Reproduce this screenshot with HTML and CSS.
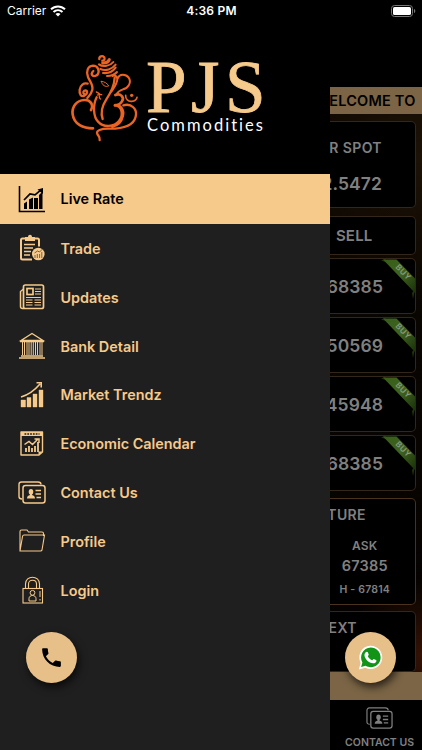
FILE: index.html
```
<!DOCTYPE html>
<html lang="en">
<head>
<meta charset="UTF-8">
<meta name="viewport" content="width=device-width, initial-scale=1.0">
<title>PJS Commodities</title>
<link rel="stylesheet" href="styles.css">
</head>
<body>
  <div class="app">
    <!-- Side menu -->
    <aside class="drawer">
      <div class="logo">
        <svg class="logo-mark" viewBox="0 0 270 318">
          <g fill="none" stroke="#ea6524" stroke-width="7" stroke-linecap="round">
            <path d="M118 45c-1-8 9-11 14-6 5 6 0 11-5 11"/>
            <path d="M128 57c9 1 17-3 20-10" stroke-width="9"/>
            <path d="M117 61c12 9 34 5 43-7M121 75c16 7 35 1 46-13M129 87c17 2 30-5 38-16M141 96c13 0 23-4 30-12" stroke-width="6"/>
            <path d="M111 93c-13 9-21-3-11-12M112 93c9-13 1-28-13-28-17 1-21 19-15 34 7 16 16 24 13 38-3 13-9 18-15 25"/>
            <path d="M83 119c-12-4-22 5-24 18-2 14 5 23 14 18 9-4 11-15 4-16-7 0-9 7-5 11"/>
            <path d="M164 101c-1 28-13 47-25 65-13 20-18 39-11 59" stroke-width="7"/>
            <path d="M158 96c7-4 14 2 14 9 0 14-10 26-18 38" stroke-width="6"/>
            <path d="M173 103c5-14 24-14 33-2 10 15-2 32-17 35-10 3-16 8-20 16" stroke-width="6"/>
            <path d="M124 112c10 1 18 6 22 14-10 4-20-2-22-14z" stroke-width="3"/>
            <path d="M109 144c4 1 7 3 10 7M112 153c5-2 8-2 13-1M118 154c-1 5 0 8 3 11" stroke-width="4"/>
            <path d="M110 160c-12 24-10 58 4 73 17 19 49 16 63-2 16-21 7-46-13-47"/>
            <path d="M166 153c16-7 28 8 20 19-5 8-15 12-23 12 19-3 30 14 25 33-4 18-17 28-31 31" stroke-width="8"/>
            <path d="M93 198c9-16-2-31-20-30-24 1-38 21-35 43 4 30 32 42 61 42" stroke-width="8"/>
            <path d="M190 184c24-7 43 11 37 34-7 30-43 36-78 36-26-1-42 6-37 16 2 5 9 8 7 18" stroke-width="7"/>
            <path d="M197 154c-1 12 8 19 18 18 9-1 15-6 16-12" stroke-width="5"/>
          </g>
          <circle cx="215" cy="154" r="5" fill="#ea6524"/>
        </svg>
        <svg class="logo-name" viewBox="0 0 124 90">
          <text class="logo-big" x="1 46 80" y="68.300">PJS</text>
          <text class="logo-small" x="2" y="86.500" textLength="116">Commodities</text>
        </svg>
      </div>

      <nav class="menu">
        <a class="menu-item active">
          <svg class="icon" viewBox="0 0 28 28">
            <path d="M1.500 1v25.500H27" fill="none" stroke="currentColor" stroke-width="1.600"/>
            <path d="M6 18.500l3-2V24H6zM11 14.500l4-2V24h-4zM16 13h4v11h-4zM21 10l3.500-3.500V24H21z" fill="currentColor"/>
            <path d="M6 15l6-6 5 .8 6-5" fill="none" stroke="currentColor" stroke-width="1.700"/>
            <path d="M19.500 4.500L25 3v6z" fill="currentColor"/>
          </svg>
          <span>Live Rate</span>
        </a>
        <a class="menu-item">
          <svg class="icon" viewBox="0 0 28 28">
            <path d="M7 4.500H4.500Q3 4.500 3 6v18q0 1.500 1.500 1.500H14M17 4.500h2.500Q21 4.500 21 6v6.500" fill="none" stroke="currentColor" stroke-width="2"/>
            <path d="M7 3h3c0-3 4-3 4 0h3v4H7z" fill="currentColor"/>
            <path d="M6 10.500h11M6 14h9M6 17.500h7M6 21h6" stroke="currentColor" stroke-width="1.500"/>
            <circle cx="20.300" cy="20" r="6.300" fill="currentColor"/>
            <path d="M17 24v-3m2.300 3v-4m2.300 4v-4m2.200 4v-6M16.500 19l3-2 2 1 3-3" fill="none" stroke="#1f1f1f" stroke-width=".6"/>
          </svg>
          <span>Trade</span>
        </a>
        <a class="menu-item">
          <svg class="icon" viewBox="0 0 28 28">
            <path d="M6 25.500H4.500Q2.500 25.500 2.500 23.500V8.500l3-2.500" fill="none" stroke="currentColor" stroke-width="1.500"/>
            <rect x="5.500" y="2" width="20" height="23.500" rx="1.800" fill="none" stroke="currentColor" stroke-width="1.700"/>
            <rect x="9" y="5.500" width="6" height="6" fill="none" stroke="currentColor" stroke-width="1.700"/>
            <path d="M17 6h6M17 8.500h6M17 11h6M8 14.500h15M8 17h6.500M16.500 17H23M8 19.500h6.500M16.500 19.500H23M8 22h6.500M16.500 22H23" stroke="currentColor" stroke-width="1"/>
          </svg>
          <span>Updates</span>
        </a>
        <a class="menu-item">
          <svg class="icon" viewBox="0 0 28 28">
            <path d="M3 8.500l11-7 11 7zM2 9.500h24M1 26h26M3 24h22" fill="none" stroke="currentColor" stroke-width="1.400"/>
            <path d="M4.500 10v13M6.500 10v13M9 10v13M11 10v13M13.200 10v13M15.300 10v13M17.500 10v13M19.500 10v13M22 10v13M24 10v13" stroke="currentColor" stroke-width="1"/>
          </svg>
          <span>Bank Detail</span>
        </a>
        <a class="menu-item">
          <svg class="icon" viewBox="0 0 28 28">
            <path d="M3 19h4.500v7H3zM9 16.500h4V26H9zM15 13h4v13h-4zM21 9h4v17h-4z" fill="currentColor" stroke="currentColor" stroke-width=".4"/>
            <path d="M3 16c7-2 13-6 19-13M18.500 1.700h4.700v4.700" fill="none" stroke="currentColor" stroke-width="1.600"/>
          </svg>
          <span>Market Trendz</span>
        </a>
        <a class="menu-item">
          <svg class="icon" viewBox="0 0 28 28">
            <path d="M3 2h21.500v20L21 25H3z" fill="none" stroke="currentColor" stroke-width="1.400" stroke-linejoin="round"/>
            <path d="M3 2h21.500v4H3z" fill="currentColor"/>
            <path d="M6.500 4h15" stroke="#1f1f1f" stroke-width="1.700" stroke-dasharray="1.800 1"/>
            <path d="M20.500 25v-3.500h4z" fill="currentColor"/>
            <path d="M8 22v-4M11 22v-6M14 22v-4M17 22v-6M20 22V12" stroke="currentColor" stroke-width="1.800"/>
            <path d="M6.500 14.500l4.500-3 3.500 3 5-5M16.500 9H21v4" fill="none" stroke="currentColor" stroke-width="1.500"/>
          </svg>
          <span>Economic Calendar</span>
        </a>
        <a class="menu-item">
          <svg class="icon" viewBox="0 0 28 28">
            <path d="M4 20c-2 0-3-1-3-2.500v-12C1 4 2 3 3.500 3H20c2 0 3 1 3 2.500" fill="none" stroke="currentColor" stroke-width="1.400"/>
            <rect x="5" y="6.500" width="22" height="17.500" rx="2.500" fill="none" stroke="currentColor" stroke-width="1.500"/>
            <ellipse cx="13" cy="12.800" rx="2.300" ry="2.900" fill="currentColor"/>
            <path d="M9 19.500c0-2.500 1.500-3 3-3.500v-2h2v2c1.500.5 3 1 3 3.500z" fill="currentColor"/>
            <path d="M17.500 11.500h5.500M17.500 15h5.500M18.500 18.500H23" stroke="currentColor" stroke-width="1.400"/>
          </svg>
          <span>Contact Us</span>
        </a>
        <a class="menu-item">
          <svg class="icon" viewBox="0 0 28 28">
            <path d="M2 24V4.500C2 3.500 2.500 3 3.500 3H9l1.500 2H24c1 0 1.500.5 1.500 1.500V9M2 24L4.500 9.500c.2-1 .7-1.500 1.500-1.500h20.500L24 23c-.2.700-.7 1-1.500 1z" fill="none" stroke="currentColor" stroke-width="1.100"/>
          </svg>
          <span>Profile</span>
        </a>
        <a class="menu-item">
          <svg class="icon" viewBox="0 0 28 28">
            <rect x="5" y="12.500" width="19.500" height="14.500" fill="none" stroke="currentColor" stroke-width="1.100"/>
            <path d="M7.500 12V8c0-9 14-9 14 0v4M10.500 12V8c0-5 8-5 8 0v4" fill="none" stroke="currentColor" stroke-width="1.100"/>
            <circle cx="14.500" cy="16.800" r="2.400" fill="none" stroke="currentColor"/>
            <path d="M11 25v-2.500c0-4 7-4 7 0V25z" fill="none" stroke="currentColor"/>
            <path d="M22 15v6M22 23v1.500" stroke="currentColor"/>
          </svg>
          <span>Login</span>
        </a>
      </nav>
    </aside>

    <!-- Dimmed live rate page -->
    <main class="page">
      <div class="marquee"><span>WELCOME TO</span></div>
      <div class="rates">
        <section class="card spot">
          <span class="card-title">SILVER SPOT</span>
          <span class="price">22.5472</span>
        </section>
        <section class="card sell"><span>SELL</span></section>
        <section class="card rate">
          <span class="price">68385</span>
          <svg class="ribbon" viewBox="0 0 36 40"><use href="#ribbon-shape"/><text class="ribbon-text" transform="translate(15 8.500) rotate(46)">BUY</text></svg>
        </section>
        <section class="card rate">
          <span class="price">50569</span>
          <svg class="ribbon" viewBox="0 0 36 40"><use href="#ribbon-shape"/><text class="ribbon-text" transform="translate(15 8.500) rotate(46)">BUY</text></svg>
        </section>
        <section class="card rate">
          <span class="price">45948</span>
          <svg class="ribbon" viewBox="0 0 36 40"><use href="#ribbon-shape"/><text class="ribbon-text" transform="translate(15 8.500) rotate(46)">BUY</text></svg>
        </section>
        <section class="card rate">
          <span class="price">68385</span>
          <svg class="ribbon" viewBox="0 0 36 40"><use href="#ribbon-shape"/><text class="ribbon-text" transform="translate(15 8.500) rotate(46)">BUY</text></svg>
        </section>
        <section class="card future">
          <span class="card-title">FUTURE</span>
          <div class="ask">
            <span class="ask-label">ASK</span>
            <span class="ask-price">67385</span>
            <span class="ask-high">H - 67814</span>
          </div>
        </section>
        <section class="card next"><span class="card-title">NEXT</span></section>
      </div>
      <div class="band"></div>
      <div class="tab">
        <svg class="tab-icon" viewBox="0 0 28 28">
          <path d="M4 20c-2 0-3-1-3-2.500v-12C1 4 2 3 3.500 3H20c2 0 3 1 3 2.500" fill="none" stroke="currentColor" stroke-width="1.200"/>
          <rect x="5" y="6.500" width="22" height="17.500" rx="2.500" fill="none" stroke="currentColor" stroke-width="1.300"/>
          <ellipse cx="13" cy="12.800" rx="2.300" ry="2.900" fill="currentColor"/>
          <path d="M9 19.500c0-2.500 1.500-3 3-3.500v-2h2v2c1.500.5 3 1 3 3.500z" fill="currentColor"/>
          <path d="M17.500 11.500h5.500M17.500 15h5.500M18.500 18.500H23" stroke="currentColor" stroke-width="1.400"/>
        </svg>
        <span>CONTACT US</span>
      </div>
    </main>

    <!-- Phone status bar -->
    <header class="status">
      <div class="carrier">
        <span>Carrier</span>
        <svg class="wifi" viewBox="0 0 16 12">
          <path d="M1 4.300c4-3.900 10-3.900 14 0M3.500 7c2.600-2.500 6.400-2.500 9 0" fill="none" stroke="#fff" stroke-width="2"/>
          <path d="M5.500 9c1.400-1.300 3.600-1.300 5 0L8 11.500z" fill="#fff"/>
        </svg>
      </div>
      <span class="time">4:36 PM</span>
      <svg class="battery" viewBox="0 0 25 12">
        <rect x=".5" y=".5" width="21" height="11" rx="3" fill="none" stroke="#777"/>
        <rect x="2" y="2" width="18" height="8" rx="1.600" fill="#fff"/>
        <path d="M23 4c1.700.5 1.700 3.500 0 4z" fill="#777"/>
      </svg>
    </header>

    <button class="fab call" aria-label="Call">
      <svg viewBox="0 0 24 24" width="25" height="25"><path d="M6.620 10.790c1.440 2.830 3.760 5.140 6.590 6.590l2.200-2.200c.27-.27.67-.36 1.020-.24 1.120.37 2.330.57 3.570.57.55 0 1 .45 1 1V20c0 .55-.45 1-1 1C10.610 21 3 13.390 3 4c0-.55.45-1 1-1h3.500c.55 0 1 .45 1 1 0 1.250.2 2.450.57 3.570.11.35.03.74-.25 1.020z"/></svg>
    </button>
    <button class="fab whatsapp" aria-label="WhatsApp">
      <svg viewBox="0 0 24 24" width="25" height="25">
        <path d="M.8 23.500l1.700-6.200C-1 10 3.500.8 12.200.8 18.300.8 23.300 5.700 23.300 12c0 8.400-8.900 13.600-16.300 9.900z" fill="#fff"/>
        <path d="M3 21.200l1.200-4.400C.9 11 4.600 2.400 12.300 2.400c5.300 0 9.400 4.200 9.400 9.500 0 7.500-8.200 11.700-14.300 8z" fill="#129516"/>
        <path d="M8.500 6.500c.5 0 .8.200 1 .7l.8 2c.1.5-.9 1.300-.9 1.700.8 1.800 2.200 3 4 3.800.5.100 1.200-1.400 1.700-1.300l2.200 1c.4.200.5.500.4 1-.3 1.500-1.800 2.300-3.200 2.200-4.200-.5-7.700-3.800-8.300-7.500-.1-1.600.8-3.500 2.300-3.600z" fill="#fff"/>
      </svg>
    </button>

    <svg class="defs" width="0" height="0">
      <defs>
        <linearGradient id="green" x1="0" y1="0" x2="1" y2="1">
          <stop offset="0" stop-color="#375d18"/>
          <stop offset=".5" stop-color="#3f6420"/>
          <stop offset="1" stop-color="#1a300a"/>
        </linearGradient>
        <g id="ribbon-shape">
          <path d="M1 1.500L5 0l4 4zM33 40l2-10-3 4z" fill="#1c350b"/>
          <path d="M3 .5h13.500L35 19.500V34z" fill="url(#green)"/>
        </g>
      </defs>
    </svg>
  </div>
</body>
</html>
```
FILE: styles.css
```
body {
  margin: 0;
  background: #000;
  font-family: Inter, "Liberation Sans", sans-serif;
}

.app {
  position: relative;
  display: flex;
  width: 422px;
  height: 750px;
  overflow: hidden;
}

/* Status bar lies over the drawer and the page */
.status {
  position: absolute;
  top: 0;
  left: 0;
  right: 0;
  height: 21px;
  padding: 0 6px 0 7px;
  display: grid;
  grid-template-columns: 1fr auto 1fr;
  align-items: center;
  box-sizing: border-box;
  color: #fff;
  font-size: 12px;
}
.carrier {
  display: flex;
  align-items: center;
  gap: 4px;
}
.wifi {
  width: 16px;
  height: 12px;
}
.time {
  font-weight: 600;
  letter-spacing: 0.2px;
}
.battery {
  justify-self: end;
  width: 25px;
  height: 12px;
}

/* Drawer */
.drawer {
  flex: none;
  width: 330px;
  background: #1f1f1f;
}
.logo {
  display: flex;
  height: 173.5px;
  padding: 44px 0 0 60px;
  box-sizing: border-box;
  background: #000;
}
.logo-mark {
  flex: none;
  width: 90px;
  height: 106px;
}
.logo-name {
  flex: none;
  width: 124px;
  height: 90px;
  margin-left: -5px;
}
.logo-big {
  font-family: "Liberation Serif", serif;
  font-size: 73px;
  fill: #f6ca8b;
  stroke: #f6ca8b;
  stroke-width: 0.8px;
}
.logo-small {
  font-family: Lato, sans-serif;
  font-size: 16.5px;
  font-variant-ligatures: none;
  fill: #fff;
}

.menu-item {
  display: flex;
  align-items: center;
  gap: 14.5px;
  height: 48.85px;
  padding-left: 18px;
  color: #f6ca8b;
  font-size: 14.4px;
  font-weight: 600;
}
.menu-item.active {
  height: 50.5px;
  background: #f6ca8b;
  color: #000;
}
.icon {
  flex: none;
  width: 28px;
  height: 28px;
}

/* Page behind the drawer */
.page {
  display: flex;
  flex-direction: column;
  width: 92px;
  height: 750px;
  padding-top: 87px;
  box-sizing: border-box;
  overflow: hidden;
  color: #808080;
  font-weight: 600;
  white-space: nowrap;
}
.marquee {
  display: flex;
  justify-content: flex-end;
  align-items: center;
  flex: none;
  height: 27px;
  padding-right: 6.5px;
  background: #7b6546;
  color: #000;
  font-size: 14.5px;
  letter-spacing: 0.2px;
}
.rates {
  display: flex;
  flex-direction: column;
  height: 558px;
  padding-right: 6px;
  background: radial-gradient(circle at 95% 8%, #1d1206, transparent 28%), radial-gradient(circle at 100% 97%, #351205, transparent 14%), linear-gradient(#0c0702, #040201);
}
.card {
  position: relative;
  display: flex;
  flex: none;
  justify-content: flex-end;
  box-sizing: border-box;
  border: 1px solid #33261a;
  border-left: 0;
  border-radius: 0 5px 5px 0;
  background: #000;
}
.card-title {
  font-size: 14px;
  letter-spacing: 0.4px;
}
.price {
  font-size: 17.5px;
  letter-spacing: 0.1px;
}
.spot {
  flex-direction: column;
  justify-content: flex-start;
  align-items: flex-end;
  gap: 17px;
  height: 87px;
  margin-top: 7px;
  padding: 17px 33px 0 0;
}
.sell {
  align-items: center;
  height: 39px;
  margin: 8px 0 3px;
  padding-right: 42.5px;
  font-size: 15px;
  letter-spacing: 0.2px;
}
.rate {
  align-items: center;
  height: 56px;
  margin-bottom: 3px;
  padding-right: 32px;
}
/* Corner ribbon lies over the card */
.ribbon {
  position: absolute;
  top: 0;
  right: -1px;
  width: 36px;
  height: 40px;
}
.ribbon-text {
  font-size: 8px;
  font-weight: 600;
  letter-spacing: 0.5px;
  fill: #8a997e;
}
.future {
  flex-direction: column;
  justify-content: flex-start;
  align-items: flex-end;
  height: 107px;
  margin-top: 4px;
  padding: 7px 25px 0 0;
  border-color: #49331c;
}
.future .card-title {
  margin-right: 24px;
}
.next .card-title {
  margin-right: 25px;
}
.ask {
  display: flex;
  flex-direction: column;
  align-items: center;
  margin-top: 15px;
}
.ask-label {
  font-size: 12px;
  letter-spacing: 0.2px;
}
.ask-price {
  margin-top: 4px;
  font-size: 14.5px;
  letter-spacing: 0.2px;
}
.ask-high {
  margin-top: 9px;
  font-size: 10.5px;
  letter-spacing: 0.2px;
}
.next {
  height: 61px;
  margin-top: 6px;
  padding: 7px 33px 0 0;
}
.band {
  flex: none;
  height: 28px;
  background: #7b6546;
}
.tab {
  display: flex;
  flex-direction: column;
  align-items: flex-end;
  flex: none;
  height: 50px;
  padding: 5px 8px 0 0;
  box-sizing: border-box;
  font-size: 10.5px;
  background: #000;
}
.tab-icon {
  width: 27px;
  height: 27px;
  margin-right: 21px;
}
.tab span {
  margin-top: 4px;
}

/* Floating buttons */
.fab {
  position: absolute;
  top: 632px;
  display: flex;
  align-items: center;
  justify-content: center;
  width: 51px;
  height: 51px;
  padding: 0;
  border: 0;
  border-radius: 50%;
  background: #e6bf89;
  box-shadow: 2px 4px 8px rgba(0, 0, 0, 0.7);
}
.call {
  left: 26px;
}
.whatsapp {
  left: 345px;
}
.defs {
  position: absolute;
}
```
